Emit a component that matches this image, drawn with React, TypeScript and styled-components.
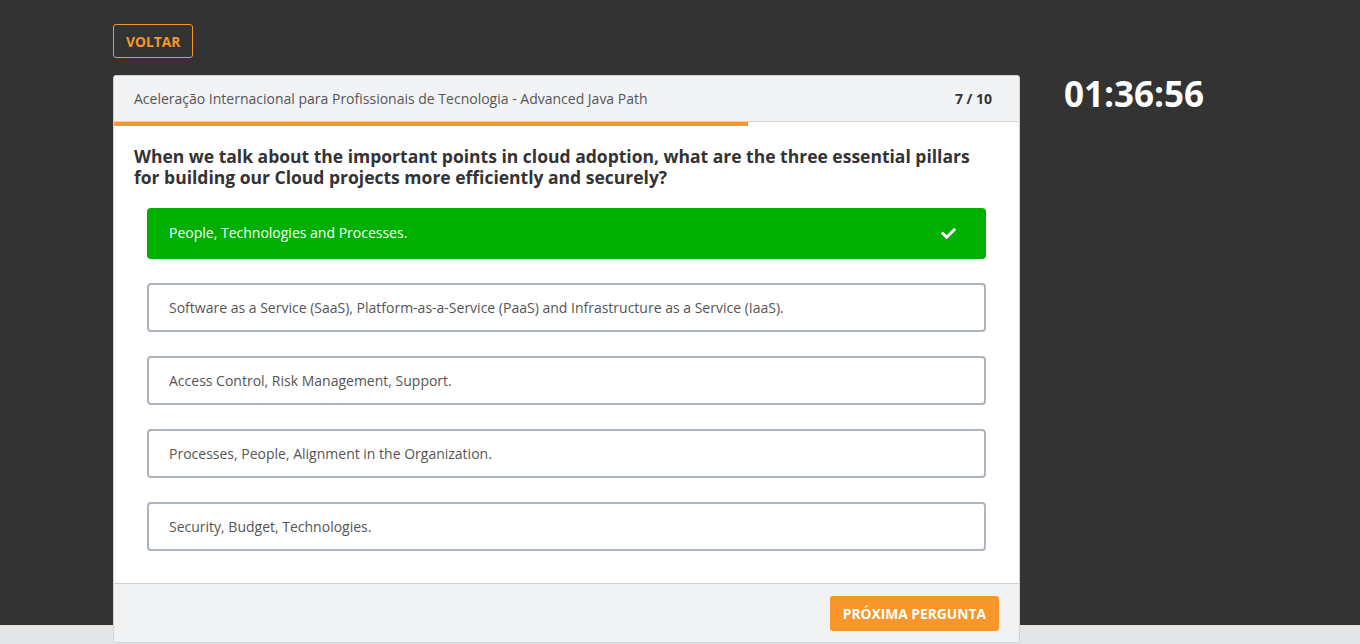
import React from "react";
import styled, { createGlobalStyle } from "styled-components";
import { FaCheck } from "react-icons/fa";

const GlobalStyle = createGlobalStyle`
  html, body { margin: 0; padding: 0; }
  body {
    font-family: "Open Sans", "Liberation Sans", Arial, sans-serif;
    background: #e4e5e7;
  }
  * { box-sizing: border-box; }
`;

const Page = styled.div`
  min-height: 644px;
  background: linear-gradient(to bottom, #333333 0, #333333 625px, #e4e5e7 625px);
  padding-top: 24px;
`;

const Container = styled.div`
  width: 1134px;
  margin: 0 auto;
`;

const BackButton = styled.button`
  display: block;
  height: 34px;
  padding: 0 12px;
  background: transparent;
  border: 1px solid #f7962b;
  border-radius: 3px;
  color: #f7962b;
  font-family: "Open Sans", "Liberation Sans", sans-serif;
  font-weight: 700;
  font-size: 13.8px;
  cursor: pointer;
`;

const Row = styled.div`
  display: flex;
  align-items: flex-start;
  margin-top: 17px;
`;

const Card = styled.div`
  width: 907px;
  background: #ffffff;
  border: 1px solid #cfd2d6;
  border-radius: 3px;
  overflow: hidden;
`;

const CardHeader = styled.div`
  display: flex;
  align-items: center;
  justify-content: space-between;
  height: 46px;
  padding: 0 27px 0 20px;
  background: #f2f3f5;
  border-bottom: 1px solid #cfd2d6;
  font-size: 14px;
  color: #555;
`;

const Count = styled.span`
  font-weight: 700;
  color: #333;
`;

const Progress = styled.div`
  height: 4px;
  background: transparent;
`;

const ProgressFill = styled.div`
  height: 100%;
  background: #f7962b;
`;

const Body = styled.div`
  padding: 20px 20px 32px;
`;

const Question = styled.h2`
  margin: 0 0 20px;
  font-size: 17.5px;
  line-height: 21px;
  font-weight: 700;
  color: #333;
`;

const Options = styled.div`
  display: flex;
  flex-direction: column;
  gap: 24px;
  padding: 0 13px;
`;

const Option = styled.div<{ $correct?: boolean }>`
  display: flex;
  align-items: center;
  justify-content: space-between;
  height: ${(p) => (p.$correct ? "51px" : "49px")};
  padding: ${(p) => (p.$correct ? "0 30px 1px 22px" : "1px 30px 0 20px")};
  border-radius: 4px;
  border: ${(p) => (p.$correct ? "none" : "2px solid #aeb4bb")};
  background: ${(p) => (p.$correct ? "#00b000" : "#ffffff")};
  color: ${(p) => (p.$correct ? "#ffffff" : "#555")};
  font-size: 14px;
  line-height: 20px;
  cursor: pointer;
`;

const CheckIcon = styled(FaCheck)`
  width: 15px;
  height: 15px;
  color: #ffffff;
`;

const Footer = styled.div`
  display: flex;
  justify-content: flex-end;
  padding: 12px 20px 11px;
  background: #f1f2f4;
  border-top: 1px solid #cfd2d6;
`;

const NextButton = styled.button`
  height: 35px;
  padding: 0 13px;
  border: none;
  border-radius: 3px;
  background: #f7962b;
  color: #ffffff;
  font-family: "Open Sans", "Liberation Sans", sans-serif;
  font-weight: 700;
  font-size: 13.8px;
  cursor: pointer;
`;

const Timer = styled.div`
  margin-left: 44px;
  margin-top: -3px;
  color: #ffffff;
  font-size: 35px;
  font-weight: 700;
  line-height: 44px;
`;

const options = [
  { text: "People, Technologies and Processes.", correct: true },
  {
    text: "Software as a Service (SaaS), Platform-as-a-Service (PaaS) and Infrastructure as a Service (IaaS).",
  },
  { text: "Access Control, Risk Management, Support." },
  { text: "Processes, People, Alignment in the Organization." },
  { text: "Security, Budget, Technologies." },
];

export default function App() {
  const progress = 7 / 10;
  return (
    <>
      <GlobalStyle />
      <Page>
        <Container>
          <BackButton>VOLTAR</BackButton>
          <Row>
            <Card>
              <CardHeader>
                <span>Aceleração Internacional para Profissionais de Tecnologia - Advanced Java Path</span>
                <Count>7 / 10</Count>
              </CardHeader>
              <Progress>
                <ProgressFill style={{ width: `${progress * 100}%` }} />
              </Progress>
              <Body>
                <Question>
                  When we talk about the important points in cloud adoption, what are the three essential pillars
                  for building our Cloud projects more efficiently and securely?
                </Question>
                <Options>
                  {options.map((o) => (
                    <Option key={o.text} $correct={o.correct}>
                      <span>{o.text}</span>
                      {o.correct && <CheckIcon />}
                    </Option>
                  ))}
                </Options>
              </Body>
              <Footer>
                <NextButton>PRÓXIMA PERGUNTA</NextButton>
              </Footer>
            </Card>
            <Timer>01:36:56</Timer>
          </Row>
        </Container>
      </Page>
    </>
  );
}
